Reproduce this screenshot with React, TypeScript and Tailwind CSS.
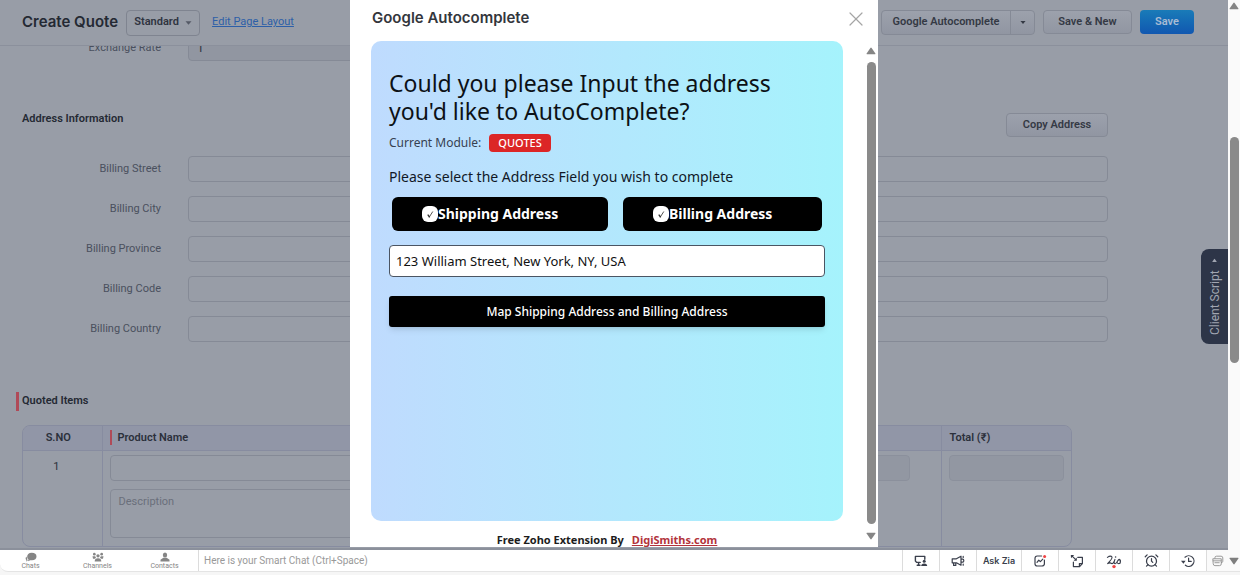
import React from "react";
import { AlarmClock, X } from "lucide-react";

const addressRows = ["Billing Street", "Billing City", "Billing Province", "Billing Code", "Billing Country"];

const fieldBox = "h-[26px] rounded border border-[#858a96] bg-transparent px-2 text-xs text-[#2f3440] outline-none";
const softButton = "rounded border border-[#858a96] bg-gradient-to-b from-[#9ca1ac] to-[#9196a2] text-[11px] font-semibold text-[#343944]";

function Triangle({ className, down = false }: { className?: string; down?: boolean }) {
  return (
    <svg viewBox="0 0 10 8" className={className} fill="currentColor" aria-hidden="true">
      <path d={down ? "M1 .8h8q.8 0 .4.7L5.6 7q-.6.8-1.2 0L.6 1.5Q.2.8 1 .8z" : "M1 7.2h8q.8 0 .4-.7L5.6 1q-.6-.8-1.2 0L.6 6.5q-.4.7.4.7z"} />
    </svg>
  );
}

function Caret({ className }: { className?: string }) {
  return (
    <svg viewBox="0 0 8 4" className={className} fill="currentColor" aria-hidden="true">
      <path d="M.6 0h6.8L4 4z" />
    </svg>
  );
}

function PageHeader() {
  return (
    <header className="flex h-[46px] shrink-0 items-center border-b border-[#8b909c] pr-[34px] pl-[22px]">
      <h1 className="font-[Inter,sans-serif] text-[15px] font-semibold text-[#242933]">Create Quote</h1>
      <button className="ml-2 flex h-[26px] w-[74px] items-center justify-center gap-[6px] rounded border border-[#7f8490] text-[11px] font-semibold text-[#2f3440]">
        Standard
        <Caret className="mt-px h-1 w-[7px] text-[#555a66]" />
      </button>
      <a href="#layout" className="ml-3 text-[11px] text-[#2d5fa8] underline">
        Edit Page Layout
      </a>
      <div className="mb-px ml-auto flex items-center gap-2">
        <div className={`flex h-[25px] ${softButton}`}>
          <button className="w-32 px-2 whitespace-nowrap">Google Autocomplete</button>
          <button aria-label="More" className="flex w-6 items-center justify-center border-l border-[#858a96]">
            <Caret className="h-[3px] w-[6px]" />
          </button>
        </div>
        <button className={`h-6 w-[89px] ${softButton}`}>Save &amp; New</button>
        <button className="h-6 w-[54px] rounded bg-gradient-to-b from-[#1a7bb8] to-[#1257b0] text-[11px] font-semibold text-[#a9bcd4]">
          Save
        </button>
      </div>
    </header>
  );
}

function QuoteForm() {
  return (
    <main className="min-h-0 flex-1 overflow-hidden">
      <div className="-mt-[11px] flex items-center">
        <label htmlFor="rate" className="w-[188px] pr-[27px] text-right text-[11px] text-[#4a505e]">
          Exchange Rate
        </label>
        <input id="rate" defaultValue="1" className={`w-1/3 bg-[#9196a1]! ${fieldBox}`} />
      </div>

      <div className="mt-[51px] mr-[120px] ml-[22px] flex h-[26px] justify-between">
        <h2 className="text-[11px] leading-[14px] font-semibold text-[#242933]">Address Information</h2>
        <button className={`mt-px h-6 w-[102px] ${softButton}`}>Copy Address</button>
      </div>

      <div className="mt-[18px] mr-[120px] flex flex-col gap-[14px]">
        {addressRows.map((name) => (
          <div key={name} className="flex items-center">
            <label htmlFor={name} className="w-[188px] pr-[27px] text-right text-[11px] text-[#4a505e]">
              {name}
            </label>
            <input id={name} className={`flex-1 ${fieldBox}`} />
          </div>
        ))}
      </div>

      <h2 className="mt-[50px] ml-4 flex h-[19px] items-center border-l-[3px] border-[#b04a58] pl-[3px] text-[11px] font-semibold text-[#242933]">
        Quoted Items
      </h2>

      <div className="mt-[14px] mr-[156px] ml-[22px] overflow-hidden rounded-lg border border-[#878ca0]">
        <table className="w-full table-fixed border-collapse text-[11px] text-[#2b303b]">
          <thead className="bg-[#9196a7]">
            <tr className="h-6 border-b border-[#878ca0] text-left">
              <th className="w-[79px] border-r border-[#878ca0] pr-2 text-center font-semibold">S.NO</th>
              <th className="w-[300px] px-[7px] font-semibold">
                <span className="block border-l-2 border-[#b04a58] pl-[6px] leading-[15px]">Product Name</span>
              </th>
              <td className="border-r border-[#878ca0]" />
              <th className="w-[130px] px-2 font-semibold">Total (₹)</th>
            </tr>
          </thead>
          <tbody>
            <tr className="h-24 align-top">
              <td className="border-r border-[#878ca0] pt-2 pr-3 text-center">1</td>
              <td className="px-[7px] pt-1">
                <input aria-label="Product Name" className={`block w-full ${fieldBox}`} />
                <textarea
                  aria-label="Description"
                  placeholder="Description"
                  className="mt-2 block h-[49px] w-full resize-none rounded border border-[#858a96] px-2 py-1 text-[11px] placeholder:text-[#6a6f7b]"
                />
              </td>
              <td className="border-r border-[#878ca0] pt-1 pr-[31px]">
                <input aria-label="Amount" disabled className={`block w-full border-[#8b909c]! bg-[#9297a2]! ${fieldBox}`} />
              </td>
              <td className="px-[7px] pt-1">
                <input aria-label="Total" disabled className={`block w-full border-[#8b909c]! bg-[#9297a2]! ${fieldBox}`} />
              </td>
            </tr>
          </tbody>
        </table>
      </div>
    </main>
  );
}

function AddressToggle({ label, className }: { label: string; className: string }) {
  return (
    <label className={`flex h-[34px] items-center rounded-md bg-black pl-[30px] text-sm font-bold text-white ${className}`}>
      <span className="grid size-4 shrink-0 place-items-center">
        <input type="checkbox" defaultChecked className="col-start-1 row-start-1 size-4 appearance-none rounded-[6px] bg-white" />
        <svg viewBox="0 0 10 10" className="col-start-1 row-start-1 size-[7px]" fill="none" stroke="#333" strokeLinecap="round">
          <path d="M1.6 5.8 3.4 8.4" strokeWidth="2" />
          <path d="M3.4 8.4 8 1.2" strokeWidth="1.2" />
        </svg>
      </span>
      {label}
    </label>
  );
}

function AutocompleteDialog() {
  return (
    <section
      role="dialog"
      aria-label="Google Autocomplete"
      className="flex h-full w-[528px] flex-col bg-white"
    >
      <div className="flex h-[41px] shrink-0 items-center justify-between pr-[14px] pb-1 pl-[22px]">
        <h2 className="font-[Inter,sans-serif] text-[15px] font-semibold text-[#33363c]">Google Autocomplete</h2>
        <button aria-label="Close" className="text-[#a5a5a5]">
          <X className="size-[16px] scale-150" strokeWidth={1.2} />
        </button>
      </div>

      <div className="flex min-h-0 flex-1">
        <div className="flex min-w-0 flex-1 flex-col pl-[21px] font-['Noto_Sans',sans-serif]">
          <div className="mr-[22px] flex-1 rounded-[10px] bg-gradient-to-r from-[#bfdbfe] to-[#a5f3fc] px-[18px] pt-7">
            <p className="text-[23px] leading-7 text-[#0c1116]">
              Could you please Input the address
              <br />
              you'd like to AutoComplete?
            </p>
            <p className="mt-[9px] flex h-[18px] items-center gap-2 text-xs text-[#374151]">
              Current Module:
              <span className="flex h-[18px] items-center rounded bg-[#dc2626] px-[9px] text-[11px] font-medium text-white">QUOTES</span>
            </p>
            <p className="mt-4 text-sm leading-[18px] text-[#111827]">Please select the Address Field you wish to complete</p>
            <div className="mx-[3px] mt-[11px] flex gap-[15px]">
              <AddressToggle label="Shipping Address" className="w-[216px]" />
              <AddressToggle label="Billing Address" className="flex-1" />
            </div>
            <input
              aria-label="Address"
              defaultValue="123 William Street, New York, NY, USA"
              className="mt-[14px] h-8 w-full rounded border border-[#4b5563] bg-white px-[6px] text-[13px] text-[#111] outline-none"
            />
            <button className="mt-[19px] h-[31px] w-full rounded-[3px] bg-black text-xs font-medium text-white shadow-md">
              Map Shipping Address and Billing Address
            </button>
          </div>
          <p className="mt-[13px] mr-[22px] flex h-[13px] items-center justify-center gap-2 text-[11px] font-bold text-[#1c1c1c]">
            Free Zoho Extension By
            <a href="#digismiths" className="text-[#b2333b] underline">
              DigiSmiths.com
            </a>
          </p>
        </div>
        <div className="mr-px flex w-3 shrink-0 flex-col items-center pt-[6px] pb-[7px] text-[#858585]">
          <Triangle className="h-2 w-[10px]" />
          <div className="mt-[7px] mb-2 w-[9px] flex-1 rounded-full bg-[#8a8a8a]" />
          <Triangle down className="h-2 w-[10px]" />
        </div>
      </div>
    </section>
  );
}

const line = { fill: "none", stroke: "currentColor", strokeWidth: 1.4, strokeLinecap: "round", strokeLinejoin: "round" } as const;

function ScreenIcon() {
  return (
    <svg viewBox="0 0 14 14" className="size-[14px]" {...line}>
      <path d="M6.2 8.4H2.6L1.4 7V2.4h9.4v2.8M4.6 8.6v2.6M3.2 11.3h2.8" />
      <circle cx="10.2" cy="7.2" r="1.5" fill="currentColor" stroke="none" />
      <path d="M7.2 12q0-2.6 3-2.6t3 2.6z" fill="currentColor" stroke="none" />
    </svg>
  );
}

function HornIcon() {
  return (
    <svg viewBox="0 0 14 14" className="size-[14px]" {...line} strokeWidth={1.2}>
      <path d="M1.2 4.8h4.2l4.6-2.6v9L5.4 8.8H1.2zM2.6 9v2.4h2.2V9M10.4 5.2h1.4q1 0 1 1.500t-1 1.500h-1.400M12.200 2.400v1M12.200 10.200v1" />
    </svg>
  );
}

function SignalIcon() {
  return (
    <svg viewBox="0 0 14 14" className="size-[14px]" {...line} strokeWidth={1.2}>
      <path d="M8.600 2H4.200Q2 2 2 4.200v5.600Q2 12 4.200 12h4.600Q11.400 12 11.400 9.800V6M4 8.400l1.800-2.200 1.600 1.400 2.400-2.400" />
      <circle cx="11.600" cy="2.400" r="1.500" fill="#ef4444" stroke="none" />
    </svg>
  );
}

function NoteIcon() {
  return (
    <svg viewBox="0 0 14 14" className="size-[14px]" {...line} strokeWidth={1.2}>
      <path d="M7.800 3.400h4.600v6.200L9.600 12.600H3.400V8M9.400 12.400V9.600h2.800M2.400 2.400l3.400 3.200" />
      <path d="M.8 1h3.400L1 4.200zM6.800 3.600v3.200H3.600z" fill="currentColor" stroke="none" />
    </svg>
  );
}

function HistoryIcon() {
  return (
    <svg viewBox="0 0 14 14" className="size-[14px]" {...line} strokeWidth={1.2}>
      <path d="M4 3.200A5.300 5.300 0 1 1 4.400 11.200M7.600 4.200v3.200h2.600" />
      <path d="M0 6.800h4.600L2.400 9.800z" fill="currentColor" stroke="none" />
    </svg>
  );
}

function StackIcon() {
  return (
    <svg viewBox="0 0 14 14" className="size-3" {...line} strokeWidth={1}>
      <path d="M3.400 3.800V3.200q0-1.800 1.800-1.800h5.400q2 0 2 2v4q0 1.400-1.600 1.600M1.400 4.400h9.400v6q0 2-2 2H3.400q-2 0-2-2zM1.400 6.800h9.200M3.400 9h5" />
    </svg>
  );
}

const chatTabs = [
  {
    label: "Chats",
    icon: <path d="M8 1C4 1 2.4 3.4 2.4 5.600c0 1.400.6 2.400 1.600 3.200L3.400 11 6 9.800c5 1 7.600-1.600 7.600-4.400C13.600 2.600 11.400 1 8 1zM1.600 5.500C0 7 .4 9 1.600 9.800L1 11.400l2-.8z" />,
  },
  {
    label: "Channels",
    icon: (
      <>
        <circle cx="2.6" cy="2.6" r="1.6" />
        <circle cx="11.4" cy="2.6" r="1.6" />
        <circle cx="7" cy="4.6" r="2" />
        <path d="M.4 5h3.200l1 2-1.400 1H1zM13.600 5h-3.200l-1 2 1.400 1H13zM3 11.400q0-4 4-4t4 4z" />
      </>
    ),
  },
  {
    label: "Contacts",
    icon: (
      <>
        <ellipse cx="7" cy="3.600" rx="2.600" ry="3" />
        <path d="M1.600 11.400V9.200L5 7h4l3.400 2.200v2.200z" />
      </>
    ),
  },
];

const tools = [
  { name: "Screen", node: <ScreenIcon /> },
  { name: "Announcements", node: <HornIcon /> },
  { name: "Ask Zia", node: null },
  { name: "Signals", node: <SignalIcon /> },
  { name: "Notes", node: <NoteIcon /> },
  {
    name: "Zia",
    node: (
      <svg viewBox="0 0 16 16" className="size-4" {...line} strokeWidth={1.1}>
        <path d="M1.400 4.400Q4.600 2.200 6 4q.6 1.600-4.400 6.600 2.800-1.400 4 0 1.600.6 3.400-4.200-1.800 4.400.2 4.400Q10.600 10.600 12 7.400q1.600-2.200 2.400.2.4 2.800-1.600 3-2.200 0-1.600-2.200.8-2 3.200-1.200l-.4 3.200" />
        <circle cx="9.600" cy="4" r=".8" fill="currentColor" stroke="none" />
        <circle cx="8" cy="13.600" r="1.700" fill="#ef4444" stroke="none" />
      </svg>
    ),
  },
  { name: "Reminders", node: <AlarmClock className="size-[15px]" strokeWidth={2} /> },
  { name: "Recent", node: <HistoryIcon /> },
];

function ChatBar() {
  return (
    <footer className="mb-[3px] flex h-[22px] shrink-0 rounded-bl-lg border-b border-[#e4e4e4] bg-white">
      <nav className="-ml-[3px] flex">
        {chatTabs.map((tab) => (
          <button key={tab.label} className="flex w-[67px] flex-col items-center pt-[2px] text-[#858585]">
            <svg viewBox="0 0 14 12" className="h-[10px] w-3" fill="currentColor" aria-hidden="true">
              {tab.icon}
            </svg>
            <span className="text-[7px] leading-[8px]">{tab.label}</span>
          </button>
        ))}
      </nav>
      <input
        aria-label="Smart Chat"
        placeholder="Here is your Smart Chat (Ctrl+Space)"
        className="min-w-0 flex-1 border-l border-[#dcdcdc] px-[5px] text-[10px] outline-none placeholder:text-[#999]"
      />
      {tools.map((tool) =>
        tool.node ? (
          <button key={tool.name} aria-label={tool.name} className="flex w-[37px] items-center justify-center border-l border-[#dcdcdc] text-[#3a3f4c]">
            {tool.node}
          </button>
        ) : (
          <button key={tool.name} className="w-[45px] border-l border-[#dcdcdc] font-[Inter,sans-serif] text-[9px] font-semibold text-[#3a3f4c]">
            {tool.name}
          </button>
        ),
      )}
      <button aria-label="Windows" className="flex w-[22px] items-center justify-center border-l border-[#dcdcdc] bg-[#fafafa] text-[#8a8a8a]">
        <StackIcon />
      </button>
      <span className="flex w-3 items-center justify-center bg-[#fafafa] text-[#7d7d7d]">
        <Triangle down className="h-2 w-[10px]" />
      </span>
    </footer>
  );
}

export default function App() {
  return (
    <div className="flex h-screen flex-col overflow-hidden bg-[#f6f6f6] font-[Roboto,sans-serif]">
      <div className="flex min-h-0 flex-1">
        <div className="relative flex min-w-0 flex-1 flex-col border-b-2 border-[#8b909b] bg-[#989da7]">
          <PageHeader />
          <QuoteForm />
          <button className="absolute top-[249px] right-0 flex h-[95px] w-[27px] rotate-180 items-center justify-center gap-2 rounded-r-lg bg-[#2d3548] text-xs text-[#a0a5b1] [writing-mode:vertical-rl]">
            Client Script
            <Triangle down className="size-[5px]" />
          </button>
          <div className="absolute inset-0 flex justify-center pb-px">
            <AutocompleteDialog />
          </div>
        </div>
        <div className="flex w-3 shrink-0 flex-col items-center bg-[#fafafa] pt-[2px] text-[#858585]">
          <Triangle className="h-2 w-[10px]" />
          <div className="mt-[127px] h-[226px] w-[9px] rounded-full bg-[#8a8a8a]" />
        </div>
      </div>
      <ChatBar />
    </div>
  );
}
